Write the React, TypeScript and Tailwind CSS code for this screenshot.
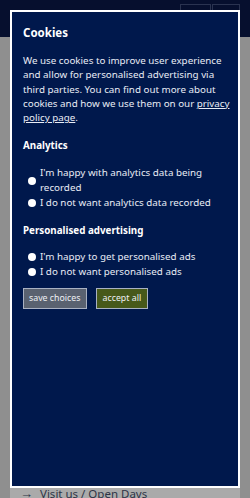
import React from "react";

function Radio({ children }: { children: React.ReactNode }) {
  return (
    <label className="flex items-center gap-[4px] pl-[5px]">
      <span className="block w-[8px] h-[8px] rounded-full bg-white shrink-0" />
      <span className="leading-[14.8px] whitespace-nowrap">{children}</span>
    </label>
  );
}

export default function App() {
  return (
    <div
      className="relative w-[250px] h-[498px] overflow-hidden bg-[#8f8f8f]"
      style={{ fontFamily: '"Noto Sans", "Open Sans", sans-serif' }}
    >
      {/* underlying page (dimmed) */}
      <div className="h-[37px] bg-[#060f2e] flex justify-end items-end gap-[1px] pr-[10px]">
        <div className="w-[31px] h-[33px] border border-[#2a3350]" />
        <div className="w-[28px] h-[33px] border border-[#2a3350]" />
      </div>
      <div className="absolute left-[10px] right-[10px] top-[487px] h-[13px] bg-[#aaaaaa] flex items-center pl-[10px] gap-[7px] text-[11.5px] leading-[13px] text-[#2e3446]">
        <span className="text-[13px] leading-none">→</span>
        <span>Visit us / Open Days</span>
      </div>

      {/* cookie dialog */}
      <div className="absolute left-[10px] top-[10px] w-[230px] h-[478px] border-2 border-white bg-[#00184c] text-white px-[11px] pt-[11px]">
        <h2 className="text-[11.5px] font-bold leading-[20px]">Cookies</h2>
        <p className="mt-[11px] text-[9.8px] leading-[14.3px] text-[#e8ecf5] whitespace-nowrap">
          We use cookies to improve user experience
          <br />
          and allow for personalised advertising via
          <br />
          third parties. You can find out more about
          <br />
          cookies and how we use them on our <span className="underline">privacy</span>
          <br />
          <span className="underline">policy page</span>.
        </p>
        <h3 className="mt-[13px] text-[9.8px] font-bold leading-[16px]">Analytics</h3>
        <div className="mt-[12px] flex flex-col text-[9.8px] text-[#e8ecf5]">
          <Radio>
            I'm happy with analytics data being
            <br />
            recorded
          </Radio>
          <Radio>I do not want analytics data recorded</Radio>
        </div>
        <h3 className="mt-[12px] text-[9.8px] font-bold leading-[16px]">Personalised advertising</h3>
        <div className="mt-[11px] flex flex-col text-[9.8px] text-[#e8ecf5]">
          <Radio>I'm happy to get personalised ads</Radio>
          <Radio>I do not want personalised ads</Radio>
        </div>
        <div className="mt-[9px] flex gap-[9px] text-[8.8px]">
          <button className="h-[21px] px-[5px] bg-[#5a6270] border border-[#a9b1c2] text-[#eef0f4]">
            save choices
          </button>
          <button className="h-[21px] px-[6px] bg-[#47591a] border border-[#a9b1c2] text-[#eef0f4]">
            accept all
          </button>
        </div>
      </div>
    </div>
  );
}
